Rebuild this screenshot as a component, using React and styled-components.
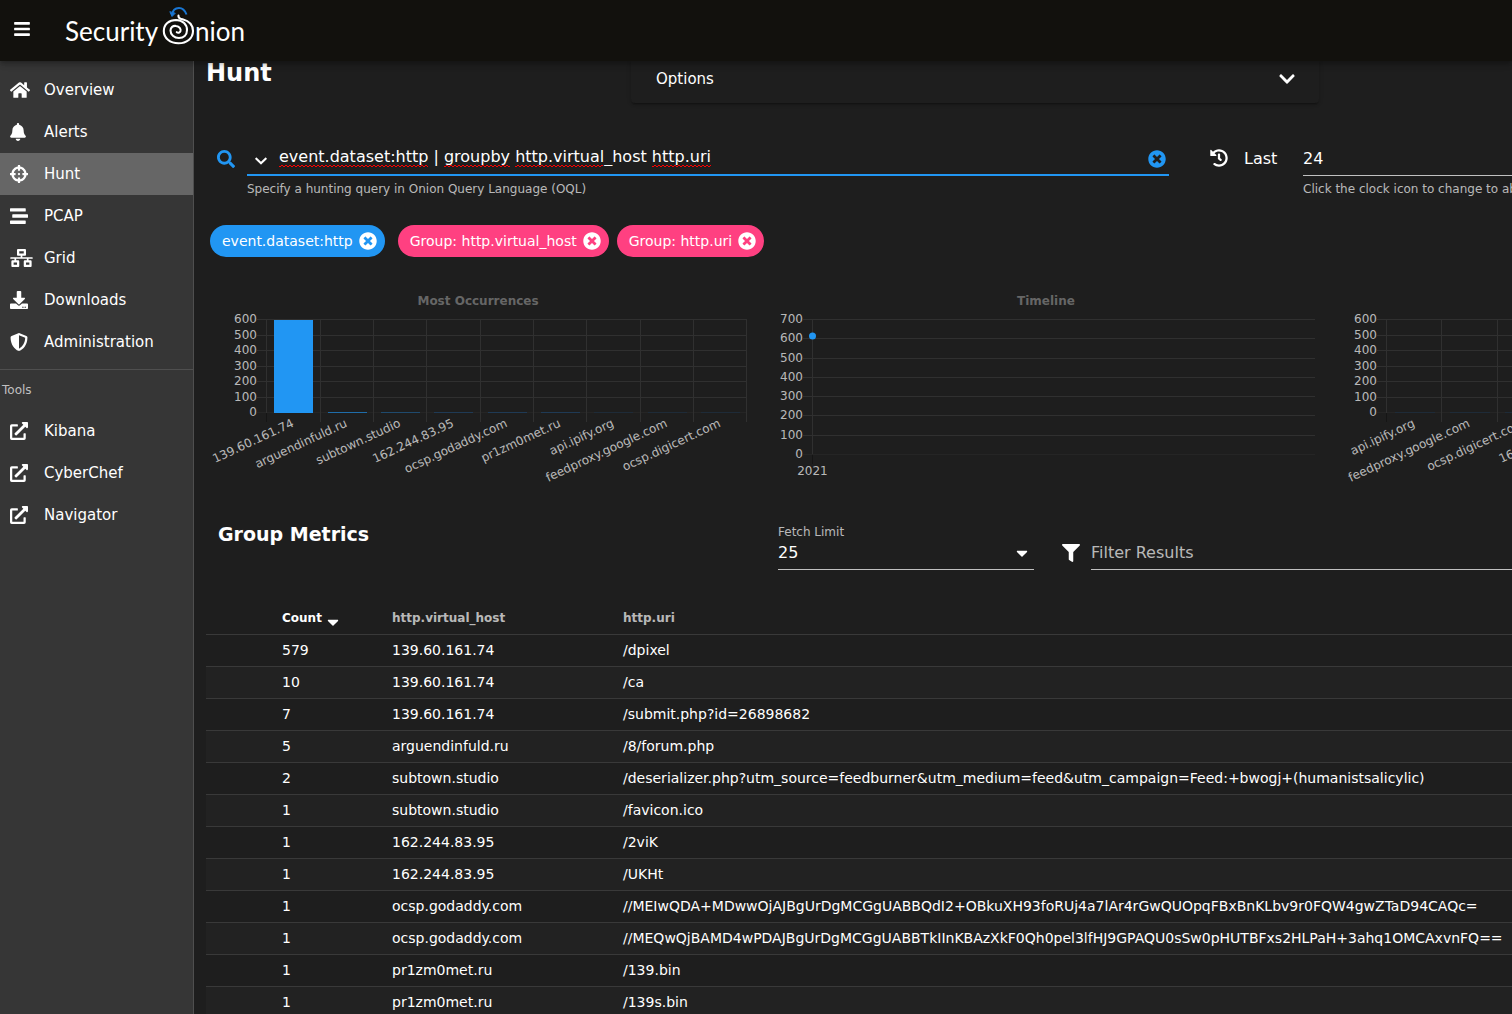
import React, { useState } from 'react';
import styled, { createGlobalStyle, css } from 'styled-components';
import {
  FaBars,
  FaBell,
  FaCaretDown,
  FaChevronDown,
  FaCrosshairs,
  FaDownload,
  FaExternalLinkAlt,
  FaFilter,
  FaHistory,
  FaHome,
  FaNetworkWired,
  FaSearch,
  FaShieldAlt,
  FaStream,
  FaTimesCircle,
} from 'react-icons/fa';

const GlobalStyle = createGlobalStyle`
  * {
    box-sizing: border-box;
  }

  body {
    margin: 0;
    background: #1e1e1e;
    color: #fff;
    font-family: 'DejaVu Sans', sans-serif;
    font-size: 14px;
  }

  button, input, select {
    margin: 0;
    padding: 0;
    border: none;
    border-radius: 0;
    background: none;
    color: inherit;
    font: inherit;
    outline: none;
  }

  button {
    cursor: pointer;
  }
`;

const Page = styled.div`
  display: flex;
  flex-direction: column;
  height: 100vh;
  overflow: hidden;
`;

const Header = styled.header`
  position: relative;
  z-index: 2;
  display: flex;
  flex: none;
  align-items: flex-start;
  gap: 35px;
  height: 61px;
  padding-left: 14px;
  background: #12110d;
  box-shadow: 0 2px 4px -1px rgba(0, 0, 0, 0.2), 0 4px 5px rgba(0, 0, 0, 0.14), 0 1px 10px rgba(0, 0, 0, 0.12);
`;

const MenuButton = styled.button`
  display: flex;
  align-items: center;
  height: 58px;

  svg {
    width: 16px;
  }
`;

const Logo = styled.a`
  display: flex;
  color: #fff;
  font-family: Lato, sans-serif;
  font-size: 26px;
  line-height: 62px;
  text-decoration: none;

  svg {
    flex: none;
    margin-left: 4px;
  }
`;

const Body = styled.div`
  display: flex;
  flex: 1;
  min-height: 0;
`;

const Sidebar = styled.nav`
  flex: none;
  width: 194px;
  padding-top: 8px;
  border-right: 1px solid #4f4f4f;
  background: #363636;
`;

const NavItem = styled.a`
  display: flex;
  align-items: center;
  height: 42px;
  padding-left: 10px;
  background: ${(props) => (props.$active ? '#666' : 'transparent')};
  color: #fff;
  font-size: 15px;
  text-decoration: none;
`;

const NavIcon = styled.span`
  display: flex;
  width: 34px;
  font-size: 18px;

  svg {
    width: ${(props) => props.$width || 18}px;
  }
`;

const NavTools = styled.div`
  margin-top: 6px;
  border-top: 1px solid #4f4f4f;
`;

const NavHeading = styled.div`
  padding-left: 2px;
  color: rgba(255, 255, 255, 0.7);
  font-size: 12px;
  line-height: 40px;
`;

const Main = styled.main`
  flex: 1;
  min-width: 0;
  padding: 0 12px;
  overflow: hidden;
`;

/* wide enough for three charts side by side, the rest runs off the right edge */
const Content = styled.div`
  min-width: 1704px;
`;

const TitleRow = styled.div`
  display: flex;
  align-items: flex-start;
`;

const Title = styled.h1`
  flex: 0 0 425px;
  margin: 0;
  font-size: 24px;
  line-height: 24px;
`;

const OptionsPanel = styled.button`
  display: flex;
  flex: 0 0 688px;
  align-items: center;
  justify-content: space-between;
  padding: 6px 24px 12px 25px;
  border-radius: 0 0 4px 4px;
  font-size: 15px;
  line-height: 24px;
  box-shadow: 0 3px 1px -2px rgba(0, 0, 0, 0.2), 0 2px 2px rgba(0, 0, 0, 0.14), 0 1px 5px rgba(0, 0, 0, 0.12);

  svg {
    width: 16px;
  }
`;

const QueryRow = styled.form`
  display: flex;
  align-items: flex-start;
  padding: 36px 0 0 11px;
`;

const IconButton = styled.button`
  display: flex;
  flex: none;
  align-items: center;
  height: ${(props) => props.$height}px;
  color: ${(props) => (props.$accent ? '#2196f3' : '#fff')};
  font-size: 18px;
`;

const HistoryButton = styled(IconButton)`
  width: 12px;
  font-size: 14px;

  svg {
    width: 12px;
  }
`;

const QueryField = styled.div`
  flex: 0 0 922px;
  margin: 0 41px 0 12px;
`;

const QueryBox = styled.div`
  display: flex;
  align-items: flex-end;
  height: 37px;
  padding: 0 3px 0 8px;
  border-bottom: 2px solid #2196f3;
`;

const SpellBox = styled.div`
  position: relative;
  flex: 1;
  align-self: center;
  margin-left: 12px;
`;

const QueryInput = styled.input`
  display: block;
  width: 100%;
  height: 32px;
  font-size: 16px;
`;

const Squiggle = styled.span`
  position: absolute;
  bottom: 6px;
  left: ${(props) => props.$start}px;
  width: ${(props) => props.$length}px;
  height: 2px;
  background: conic-gradient(#f00 25%, transparent 0 50%, #f00 0 75%, transparent 0) 0 0 / 4px 2px;
  pointer-events: none;
`;

const Hint = styled.div`
  color: rgba(255, 255, 255, 0.7);
  font-size: 12px;
  line-height: 14px;
  padding-top: 6px;
`;

const LastLabel = styled.label`
  width: 59px;
  margin-left: 16px;
  font-size: 16px;
  line-height: 40px;
`;

const LastField = styled.div`
  flex: 1;
`;

const UnderlineInput = styled.input`
  display: block;
  width: 100%;
  height: 37px;
  padding-top: 2px;
  border-bottom: 1px solid #c0c0c0;
  font-size: 16px;

  &::placeholder {
    color: rgba(255, 255, 255, 0.7);
    opacity: 1;
  }
`;

const Chips = styled.div`
  display: flex;
  gap: 13px;
  padding: 29px 4px 0;
`;

const ChipGroup = styled.div`
  display: flex;
  gap: 8px;
`;

const Chip = styled.span`
  display: flex;
  align-items: center;
  gap: 6px;
  height: 32px;
  padding: 0 8px 0 12px;
  border-radius: 16px;
  background: ${(props) => (props.$group ? '#ff4081' : '#2196f3')};
  font-size: 14px;
`;

const ChipClose = styled.button`
  display: flex;
  font-size: 18px;
`;

const Charts = styled.div`
  display: grid;
  grid-template-columns: repeat(3, 1fr);
  padding-top: 32px;
`;

const ChartSvg = styled.svg`
  display: block;
  width: 100%;

  text {
    fill: rgba(255, 255, 255, 0.7);
    font-size: 12px;
  }

  .title {
    fill: #666;
    font-weight: bold;
  }
`;

const MetricsBar = styled.div`
  display: flex;
  align-items: flex-start;
  padding: 26px 0 0 12px;
`;

const MetricsTitle = styled.h2`
  flex: 0 0 560px;
  margin: 0;
  font-size: 19px;
  line-height: 22px;
`;

const FetchLimit = styled.div`
  position: relative;
  flex: 0 0 256px;

  label {
    display: block;
    color: rgba(255, 255, 255, 0.7);
    font-size: 12px;
    line-height: 18px;
  }

  select {
    display: block;
    appearance: none;
    width: 100%;
    height: 29px;
    padding-bottom: 6px;
    border-bottom: 1px solid #c0c0c0;
    font-size: 16px;
  }

  svg {
    position: absolute;
    right: 6px;
    bottom: 8px;
    width: 12px;
    font-size: 18px;
    pointer-events: none;
  }
`;

const FilterField = styled.div`
  display: flex;
  flex: 1;
  align-items: center;
  gap: 11px;
  margin-left: 28px;
  padding-top: 10px;

  svg {
    flex: none;
    margin-top: 2px;
    font-size: 18px;
  }
`;

const MetricsTable = styled.table`
  width: 100%;
  margin-top: 32px;
  border-collapse: collapse;
  table-layout: fixed;
`;

const headActive = css`
  color: #fff;
`;

const HeadCell = styled.th`
  width: ${(props) => (props.$width ? `${props.$width}px` : 'auto')};
  height: 32px;
  padding: 0;
  color: rgba(255, 255, 255, 0.7);
  font-size: 12px;
  text-align: left;
  ${(props) => props.$active && headActive}
`;

const SortLabel = styled.span`
  display: flex;
  align-items: center;
  gap: 2px;

  svg {
    margin-top: 8px;
    font-size: 18px;
  }
`;

const Row = styled.tr`
  height: 32px;
  border-top: 1px solid #393939;

  &:nth-child(even) {
    background: #222;
  }
`;

const Cell = styled.td`
  padding: 0;
  font-size: 14px;
  white-space: nowrap;
`;

const mainNav = [
  { label: 'Overview', icon: FaHome, width: 20 },
  { label: 'Alerts', icon: FaBell, width: 16 },
  { label: 'Hunt', icon: FaCrosshairs },
  { label: 'PCAP', icon: FaStream },
  { label: 'Grid', icon: FaNetworkWired, width: 23 },
  { label: 'Downloads', icon: FaDownload },
  { label: 'Administration', icon: FaShieldAlt },
];

const tools = ['Kibana', 'CyberChef', 'Navigator'];

const misspelled = [
  { start: 0, length: 149 },
  { start: 165, length: 66 },
  { start: 236, length: 88 },
  { start: 373, length: 59 },
];

const most = [
  { name: '139.60.161.74', color: '#2196f3' },
  { name: 'arguendinfuld.ru', color: '#1f6daa' },
  { name: 'subtown.studio', color: '#1f4a6d' },
  { name: '162.244.83.95', color: '#1f3a55' },
  { name: 'ocsp.godaddy.com', color: '#1f3a55' },
  { name: 'pr1zm0met.ru', color: '#1f3a55' },
  { name: 'api.ipify.org', color: '#1e2b38' },
  { name: 'feedproxy.google.com', color: '#1e2b38' },
  { name: 'ocsp.digicert.com', color: '#1e2b38' },
];

const fewest = [most[6], most[7], most[8], most[3], most[4], most[5], most[2], most[1], most[0]];

const metrics = [
  [579, '139.60.161.74', '/dpixel'],
  [10, '139.60.161.74', '/ca'],
  [7, '139.60.161.74', '/submit.php?id=26898682'],
  [5, 'arguendinfuld.ru', '/8/forum.php'],
  [2, 'subtown.studio', '/deserializer.php?utm_source=feedburner&utm_medium=feed&utm_campaign=Feed:+bwogj+(humanistsalicylic)'],
  [1, 'subtown.studio', '/favicon.ico'],
  [1, '162.244.83.95', '/2viK'],
  [1, '162.244.83.95', '/UKHt'],
  [1, 'ocsp.godaddy.com', '//MEIwQDA+MDwwOjAJBgUrDgMCGgUABBQdI2+OBkuXH93foRUj4a7lAr4rGwQUOpqFBxBnKLbv9r0FQW4gwZTaD94CAQc='],
  [1, 'ocsp.godaddy.com', '//MEQwQjBAMD4wPDAJBgUrDgMCGgUABBTkIInKBAzXkF0Qh0pel3lfHJ9GPAQU0sSw0pHUTBFxs2HLPaH+3ahq1OMCAxvnFQ=='],
  [1, 'pr1zm0met.ru', '/139.bin'],
  [1, 'pr1zm0met.ru', '/139s.bin'],
];

const OnionMark = () => (
  <svg width="33" height="60" viewBox="0 0 33 60" fill="none" strokeLinecap="round">
    <path
      d="M16.500 15.500C16 18 18 18.800 20.500 19.300C27 21 31 25 31 31C31 38.500 24.500 43.300 16.500 43.300C8 43.300 1.800 38 1.800 31C1.800 24.500 7 20 14 20C21 20.200 25 24.500 25 30C25 35 21.500 38 17 38C12 38 8.500 34.500 8.500 30.500C8.500 27.500 11 25.500 14 26C17.500 26.500 19 29 18.500 31C18 32.800 16 33.200 14.800 32.200"
      stroke="#fff"
      strokeWidth="2.1"
    />
    <path d="M24.500 14.500C23 10.500 20.500 8 17 8C13 8 10.500 11 10 15" stroke="#1976d2" strokeWidth="2" strokeLinecap="butt" />
    <path d="M8 12L10 16.500L13 13.500Z" fill="#1976d2" stroke="#1976d2" />
  </svg>
);

const BarChart = ({ title, bars, left, peak }) => {
  const right = 540;
  const step = (right - left) / bars.length;
  const ticks = [600, 500, 400, 300, 200, 100, 0];
  const yOf = (i) => Math.round(30 + (i * 93) / 6) + 0.5;
  const xOf = (i) => Math.round(left + i * step + 0.3) + 0.5;

  return (
    <ChartSvg viewBox="0 0 568 208">
      <text className="title" x="272" y="16" textAnchor="middle">{title}</text>
      {ticks.map((tick, i) => (
        <g key={tick}>
          <path d={`M${left - 9} ${yOf(i)}H${right + 1}`} stroke={tick ? '#303030' : '#252525'} />
          <text x={left - 9} y={yOf(i) + 3} textAnchor="end">{tick}</text>
        </g>
      ))}
      {[...bars, null].map((bar, i) => (
        <path key={i} d={`M${xOf(i)} 30V133`} stroke="#303030" />
      ))}
      <path d={`M${xOf(0)} 124V133`} stroke="#151515" />
      {bars.map((bar, i) => {
        const tall = i === peak;
        return (
          <g key={bar.name}>
            <rect
              x={Math.round(left + i * step + step * 0.14) + 1}
              y={tall ? 31 : 123}
              width={Math.round(step * 0.73)}
              height={tall ? 93 : 1}
              fill={bar.color}
            />
            <text textAnchor="end" transform={`translate(${left + (i + 0.5) * step + 2} 137) rotate(-25)`}>
              {bar.name}
            </text>
          </g>
        );
      })}
    </ChartSvg>
  );
};

const TimelineChart = () => {
  const ticks = [700, 600, 500, 400, 300, 200, 100, 0];
  const yOf = (i) => Math.round(30 + (i * 135) / 7) + 0.5;

  return (
    <ChartSvg viewBox="0 0 568 208">
      <text className="title" x="272" y="16" textAnchor="middle">Timeline</text>
      {ticks.map((tick, i) => (
        <g key={tick}>
          <path d={`M29 ${yOf(i)}H541`} stroke={tick ? '#303030' : '#252525'} />
          <text x="29" y={yOf(i) + 3} textAnchor="end">{tick}</text>
        </g>
      ))}
      <path d="M38.5 30V165" stroke="#303030" />
      <path d="M38.5 166V175" stroke="#151515" />
      <circle cx="38.5" cy="47" r="3.5" fill="#2196f3" />
      <text x="38.5" y="186" textAnchor="middle">2021</text>
    </ChartSvg>
  );
};

const App = () => {
  const [query, setQuery] = useState('event.dataset:http | groupby http.virtual_host http.uri');
  const [last, setLast] = useState('24');
  const [limit, setLimit] = useState('25');

  return (
    <Page>
      <GlobalStyle />
      <Header>
        <MenuButton aria-label="Menu"><FaBars size={18} /></MenuButton>
        <Logo href="#">
          Security
          <OnionMark />
          nion
        </Logo>
      </Header>
      <Body>
        <Sidebar>
          {mainNav.map(({ label, icon: Icon, width }) => (
            <NavItem key={label} href="#" $active={label === 'Hunt'}>
              <NavIcon $width={width}><Icon /></NavIcon>
              {label}
            </NavItem>
          ))}
          <NavTools>
            <NavHeading>Tools</NavHeading>
            {tools.map((tool) => (
              <NavItem key={tool} href="#">
                <NavIcon><FaExternalLinkAlt /></NavIcon>
                {tool}
              </NavItem>
            ))}
          </NavTools>
        </Sidebar>
        <Main>
          <Content>
            <TitleRow>
              <Title>Hunt</Title>
              <OptionsPanel>
                Options
                <FaChevronDown size={18} />
              </OptionsPanel>
            </TitleRow>
            <QueryRow onSubmit={(e) => e.preventDefault()}>
              <IconButton aria-label="Search" $accent $height={40}><FaSearch /></IconButton>
              <QueryField>
                <QueryBox>
                  <HistoryButton type="button" aria-label="Saved queries" $height={27}>
                    <FaChevronDown />
                  </HistoryButton>
                  <SpellBox>
                    <QueryInput
                      aria-label="Query"
                      spellCheck={false}
                      value={query}
                      onChange={(e) => setQuery(e.target.value)}
                    />
                    {misspelled.map((word) => (
                      <Squiggle key={word.start} $start={word.start} $length={word.length} />
                    ))}
                  </SpellBox>
                  <IconButton type="button" aria-label="Clear" $accent $height={30} onClick={() => setQuery('')}>
                    <FaTimesCircle />
                  </IconButton>
                </QueryBox>
                <Hint>Specify a hunting query in Onion Query Language (OQL)</Hint>
              </QueryField>
              <IconButton type="button" aria-label="Time range" $height={37}><FaHistory /></IconButton>
              <LastLabel htmlFor="last">Last</LastLabel>
              <LastField>
                <UnderlineInput id="last" value={last} onChange={(e) => setLast(e.target.value)} />
                <Hint>Click the clock icon to change to absolute time</Hint>
              </LastField>
            </QueryRow>
            <Chips>
              <ChipGroup>
                <Chip>
                  event.dataset:http
                  <ChipClose aria-label="Remove filter"><FaTimesCircle /></ChipClose>
                </Chip>
              </ChipGroup>
              <ChipGroup>
                {['http.virtual_host', 'http.uri'].map((field) => (
                  <Chip key={field} $group>
                    Group: {field}
                    <ChipClose aria-label="Remove group"><FaTimesCircle /></ChipClose>
                  </Chip>
                ))}
              </ChipGroup>
            </Chips>
            <Charts>
              <BarChart title="Most Occurrences" bars={most} left={60} peak={0} />
              <TimelineChart />
              <BarChart title="Fewest Occurrences" bars={fewest} left={44} peak={8} />
            </Charts>
            <MetricsBar>
              <MetricsTitle>Group Metrics</MetricsTitle>
              <FetchLimit>
                <label htmlFor="limit">Fetch Limit</label>
                <select id="limit" value={limit} onChange={(e) => setLimit(e.target.value)}>
                  <option>10</option>
                  <option>25</option>
                  <option>50</option>
                </select>
                <FaCaretDown />
              </FetchLimit>
              <FilterField>
                <FaFilter />
                <UnderlineInput aria-label="Filter Results" placeholder="Filter Results" />
              </FilterField>
            </MetricsBar>
            <MetricsTable>
              <thead>
                <tr>
                  <HeadCell $width={76} aria-label="Actions" />
                  <HeadCell $width={110} $active>
                    <SortLabel>Count <FaCaretDown /></SortLabel>
                  </HeadCell>
                  <HeadCell $width={231}>http.virtual_host</HeadCell>
                  <HeadCell>http.uri</HeadCell>
                </tr>
              </thead>
              <tbody>
                {metrics.map(([count, host, uri]) => (
                  <Row key={uri}>
                    <Cell />
                    <Cell>{count}</Cell>
                    <Cell>{host}</Cell>
                    <Cell>{uri}</Cell>
                  </Row>
                ))}
              </tbody>
            </MetricsTable>
          </Content>
        </Main>
      </Body>
    </Page>
  );
};

export default App;
